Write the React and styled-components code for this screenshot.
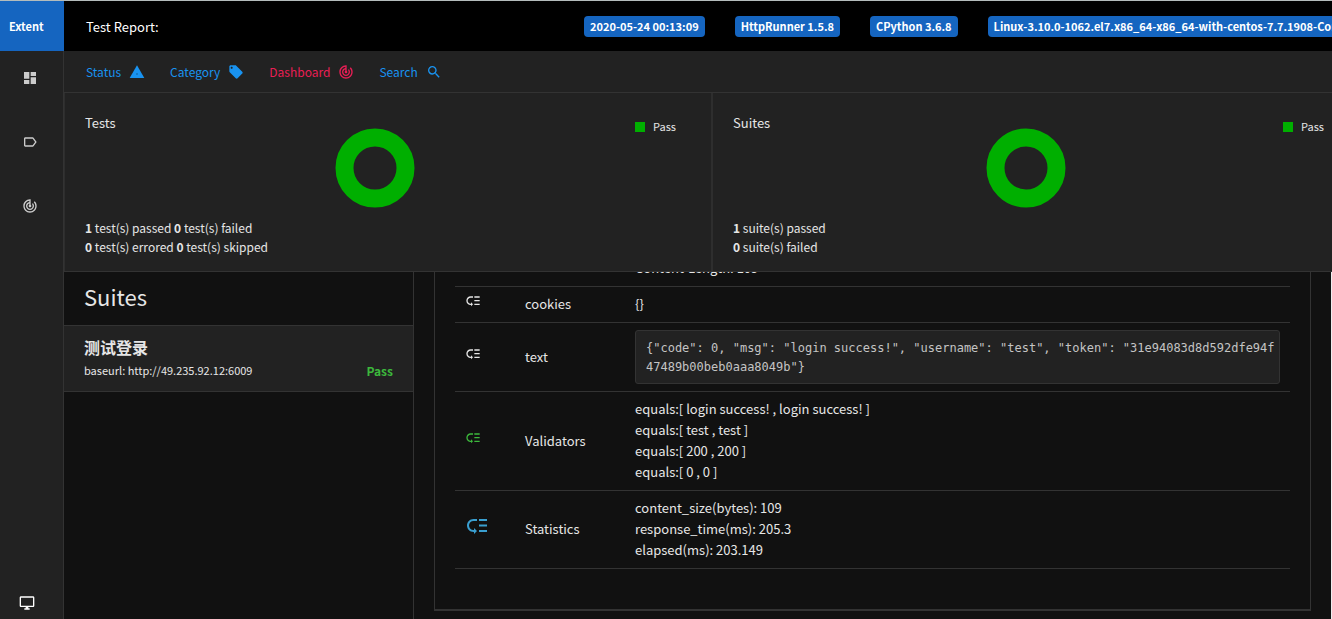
import React from "react";
import styled, { createGlobalStyle } from "styled-components";
import {
  MdDashboard,
  MdLabelOutline,
  MdLocalOffer,
  MdLowPriority,
  MdOutlineDesktopWindows,
  MdSearch,
  MdTrackChanges,
} from "react-icons/md";

const color = {
  page: "#111",
  panel: "#222",
  line: "#333",
  text: "#e6e6e6",
  primary: "#1565c0",
  link: "#1993f0",
  active: "#e91e55",
  pass: "#3cb83c",
  chart: "#00af00",
};

const GlobalStyle = createGlobalStyle`
  * { box-sizing: border-box; }
  body {
    margin: 0;
    background: ${color.page};
    color: ${color.text};
    font: 13px/19px "Noto Sans CJK SC", sans-serif;
    overflow: hidden;
  }
  h1, h2, h3, p, pre, ul { margin: 0; padding: 0; font: inherit; }
  ul { list-style: none; }
  a { color: inherit; text-decoration: none; }
  button { padding: 0; border: 0; background: none; font: inherit; cursor: pointer; }
`;

const Page = styled.div`
  display: flex;
  flex-direction: column;
  height: 100vh;
  border-top: 1px solid #b4bcbc;
`;

const Header = styled.header`
  display: flex;
  flex: none;
  align-items: center;
  height: 50px;
  background: #000;
  overflow: hidden;
`;

const Logo = styled.a`
  display: flex;
  flex: none;
  align-items: center;
  align-self: stretch;
  width: 64px;
  padding-left: 9px;
  background: ${color.primary};
  color: #fff;
  font-size: 11px;
  font-weight: 700;
`;

const ReportTitle = styled.h1`
  flex: none;
  width: 520px;
  padding-left: 22px;
  color: #fff;
`;

const Tags = styled.ul`
  display: flex;
  gap: 30px;
`;

const Tag = styled.li`
  padding: 1px 6px;
  border-radius: 4px;
  background: ${color.primary};
  color: #fff;
  font-size: 11px;
  font-weight: 700;
  white-space: nowrap;
`;

const Shell = styled.div`
  display: flex;
  flex: 1;
  min-height: 0;
`;

const Sidebar = styled.nav`
  display: flex;
  flex: none;
  flex-direction: column;
  width: 64px;
  padding-bottom: 8px;
  border-right: 1px solid ${color.line};
  background: ${color.panel};
`;

const SideLink = styled.a`
  display: flex;
  align-items: center;
  height: ${(p) => (p.$foot ? "16px" : "64px")};
  margin-top: ${(p) => (p.$foot ? "auto" : "0")};
  padding-left: ${(p) => (p.$foot ? "19px" : "22px")};
  color: ${(p) => (p.$foot ? "#fff" : "#ccc")};
`;

const SideTop = styled.div`
  margin-top: -5px;
`;

const Main = styled.main`
  display: flex;
  flex: 1;
  flex-direction: column;
  min-width: 0;
  overflow: hidden;
`;

const Toolbar = styled.div`
  display: flex;
  flex: none;
  gap: 25px;
  height: 42px;
  padding-left: 22px;
  border-bottom: 1px solid ${color.line};
  background: ${color.panel};
`;

const ToolButton = styled.button`
  display: flex;
  gap: 8px;
  align-items: center;
  color: ${(p) => (p.$active ? color.active : color.link)};
  font-size: 12px;
`;

/* The cards run a little past the right edge of the window. */
const Dashboard = styled.section`
  display: flex;
  flex: none;
  width: calc(100% + 28px);
  border-bottom: 1px solid ${color.line};
  background: ${color.panel};
`;

const ChartCard = styled.article`
  flex: 1;
  padding: 20px 35px 15px 20px;
  border: solid #2e2e2e;
  border-width: 0 1px;
`;

const ChartHead = styled.div`
  display: flex;
  align-items: flex-start;
`;

const ChartTitle = styled.h2`
  width: ${(p) => p.$width};
`;

const Donut = styled.svg`
  width: 80px;
  height: 80px;
  margin-top: 15px;
`;

const Legend = styled.p`
  display: flex;
  gap: 8px;
  align-items: center;
  margin: 4px 0 0 auto;
  font-size: 11px;
`;

const Swatch = styled.span`
  width: 10px;
  height: 10px;
  background: ${color.chart};
`;

const Totals = styled.p`
  margin-top: 10px;
  font-size: 12px;
`;

const Columns = styled.div`
  display: flex;
  flex: 1;
  min-height: 0;
  border-right: 1px solid #eee;
  overflow: hidden;
`;

const SuiteList = styled.section`
  flex: none;
  width: 350px;
  border-right: 1px solid ${color.line};
`;

const ListTitle = styled.h2`
  padding: 8px 20px 13px;
  font-size: 22px;
  line-height: 32px;
`;

const SuiteItem = styled.a`
  display: flex;
  align-items: flex-end;
  justify-content: space-between;
  padding: 9px 20px 11px;
  border: solid ${color.line};
  border-width: 1px 0;
  background: ${color.panel};
`;

const SuiteName = styled.h3`
  margin-bottom: 2px;
  font-size: 16px;
  font-weight: 700;
  line-height: 24px;
`;

const SuiteUrl = styled.p`
  font-size: 11px;
`;

const Status = styled.span`
  color: ${color.pass};
  font-size: 12px;
  font-weight: 700;
`;

const Details = styled.section`
  flex: 1;
  min-width: 0;
  padding: 0 20px;
`;

/* Scrolled so that the first row is partly under the dashboard. */
const DetailCard = styled.div`
  margin-top: -21px;
  padding: 0 20px 40px;
  border: solid ${color.line};
  border-width: 0 1px 2px;
`;

const Table = styled.table`
  width: 100%;
  border-collapse: collapse;
  table-layout: fixed;
  line-height: 21px;
`;

const Cell = styled.td`
  width: ${(p) => p.$width || "auto"};
  padding: ${(p) => (p.$boxed ? "7px 10px" : "6px 10px 8px")};
  border-bottom: 1px solid ${color.line};
  color: ${(p) => p.$tone || color.text};
`;

const Code = styled.pre`
  padding: 8px 4px 6px 10px;
  border: 1px solid ${color.line};
  border-radius: 3px;
  background: ${color.panel};
  color: #c4c4c4;
  font: 12px/19px "DejaVu Sans Mono", monospace;
  white-space: pre-wrap;
  word-break: break-all;
`;

function StatusIcon() {
  return (
    <svg width="16" height="16" viewBox="0 0 24 24" aria-hidden="true">
      <path d="M1 21h22L12 2z" fill="currentColor" />
      <path d="M11 14h2v2h-2z" fill="#0b5f9e" />
    </svg>
  );
}

const sideLinks = [
  ["Tests", MdDashboard],
  ["Categories", MdLabelOutline],
  ["Dashboard", MdTrackChanges],
];

const tools = [
  ["Status", StatusIcon],
  ["Category", MdLocalOffer],
  ["Dashboard", MdTrackChanges],
  ["Search", MdSearch],
];

const tags = [
  "2020-05-24 00:13:09",
  "HttpRunner 1.5.8",
  "CPython 3.6.8",
  "Linux-3.10.0-1062.el7.x86_64-x86_64-with-centos-7.7.1908-Core",
];

function Chart({ title, titleWidth, children }) {
  return (
    <ChartCard>
      <ChartHead>
        <ChartTitle $width={titleWidth}>{title}</ChartTitle>
        <Donut viewBox="0 0 80 80" aria-hidden="true">
          <circle cx="40" cy="40" r="30.5" fill="none" stroke={color.chart} strokeWidth="18" />
        </Donut>
        <Legend>
          <Swatch />
          Pass
        </Legend>
      </ChartHead>
      <Totals>{children}</Totals>
    </ChartCard>
  );
}

function Row({ name, lines, tone, size = 16, icon = true, children }) {
  return (
    <tr>
      <Cell $width="60px" $tone={tone}>{icon && <MdLowPriority size={size} />}</Cell>
      <Cell $width="110px">{name}</Cell>
      <Cell $boxed={!lines}>{children || lines.map((line) => <div key={line}>{line}</div>)}</Cell>
    </tr>
  );
}

export default function App() {
  return (
    <Page>
      <GlobalStyle />
      <Header>
        <Logo href="#">Extent</Logo>
        <ReportTitle>Test Report:</ReportTitle>
        <Tags>
          {tags.map((tag) => (
            <Tag key={tag}>{tag}</Tag>
          ))}
        </Tags>
      </Header>
      <Shell>
        <Sidebar>
          <SideTop>
            {sideLinks.map(([label, Icon]) => (
              <SideLink key={label} href="#" aria-label={label}>
                <Icon size={16} />
              </SideLink>
            ))}
          </SideTop>
          <SideLink $foot href="#" aria-label="Theme">
            <MdOutlineDesktopWindows size={16} />
          </SideLink>
        </Sidebar>
        <Main>
          <Toolbar>
            {tools.map(([label, Icon]) => (
              <ToolButton key={label} type="button" $active={label === "Dashboard"}>
                {label}
                <Icon size={16} />
              </ToolButton>
            ))}
          </Toolbar>
          <Dashboard>
            <Chart title="Tests" titleWidth="250px">
              <b>1</b> test(s) passed <b>0</b> test(s) failed
              <br />
              <b>0</b> test(s) errored <b>0</b> test(s) skipped
            </Chart>
            <Chart title="Suites" titleWidth="253px">
              <b>1</b> suite(s) passed
              <br />
              <b>0</b> suite(s) failed
            </Chart>
          </Dashboard>
          <Columns>
            <SuiteList>
              <ListTitle>Suites</ListTitle>
              <SuiteItem href="#">
                <div>
                  <SuiteName lang="zh">测试登录</SuiteName>
                  <SuiteUrl>baseurl: http://49.235.92.12:6009</SuiteUrl>
                </div>
                <Status>Pass</Status>
              </SuiteItem>
            </SuiteList>
            <Details>
              <DetailCard>
                <Table>
                  <tbody>
                    <Row icon={false} lines={["Content-Length: 109"]} />
                    <Row name="cookies" lines={["{}"]} />
                    <Row name="text">
                      <Code>
                        {'{"code": 0, "msg": "login success!", "username": "test", "token": "31e94083d8d592dfe94f47489b00beb0aaa8049b"}'}
                      </Code>
                    </Row>
                    <Row
                      name="Validators"
                      tone={color.pass}
                      lines={[
                        "equals:[ login success! , login success! ]",
                        "equals:[ test , test ]",
                        "equals:[ 200 , 200 ]",
                        "equals:[ 0 , 0 ]",
                      ]}
                    />
                    <Row
                      name="Statistics"
                      tone="#3a9fd0"
                      size={24}
                      lines={["content_size(bytes): 109", "response_time(ms): 205.3", "elapsed(ms): 203.149"]}
                    />
                  </tbody>
                </Table>
              </DetailCard>
            </Details>
          </Columns>
        </Main>
      </Shell>
    </Page>
  );
}
